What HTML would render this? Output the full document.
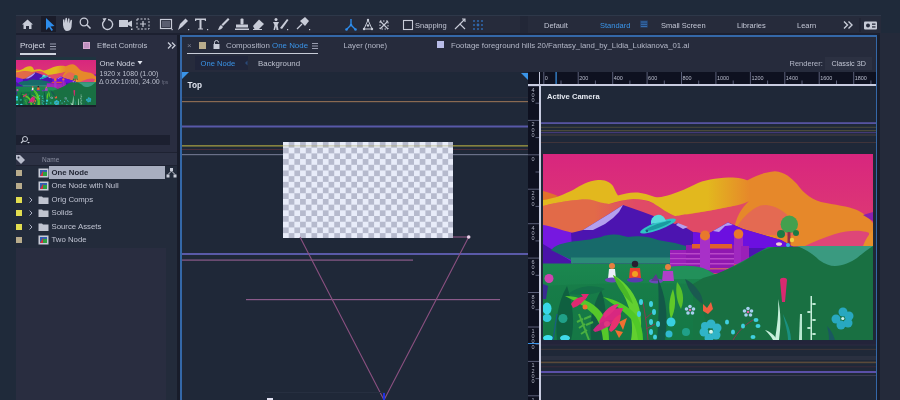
<!DOCTYPE html>
<html><head><meta charset="utf-8">
<style>
*{margin:0;padding:0;box-sizing:border-box}
html,body{width:900px;height:400px;overflow:hidden;background:#1f2a3a;font-family:"Liberation Sans", sans-serif;}
.a{position:absolute}
.t{position:absolute;white-space:nowrap;font-size:7.7px;line-height:10px;color:#c0c4d2}
</style></head><body><div style="position:absolute;left:0;top:0;width:900px;height:400px;overflow:hidden;filter:blur(0.4px)">
<div class="a" style="left:0;top:0;width:900px;height:400px;background:#1f2a3a"></div>
<!-- toolbar -->
<div class="a" style="left:16px;top:15px;width:865px;height:18px;background:#262b3b"></div><div class="a" style="left:16px;top:15px;width:865px;height:1px;background:#2e3849"></div>
<svg class="a" style="left:0;top:1px" width="900" height="40"><g transform="translate(0,-1)">
<path d="M22 24.5 L27.5 19.5 L33 24.5 L31.5 24.5 L31.5 29 L29 29 L29 26 L26 26 L26 29 L23.5 29 L23.5 24.5 Z" fill="#c8ccd8"/>
<rect x="41" y="16" width="15" height="16" fill="#1a1c2a"/>
<path d="M46 18 L46 30 L49 27 L51.5 31 L53 30 L50.5 26.5 L54.5 26 Z" fill="#2d8ceb"/>
<path d="M63 25 L63 20 C63 19 64.5 19 64.5 20 L64.5 23 L65.5 18.5 C65.5 17.5 67 17.5 67 18.5 L67 23 L68 19 C68 18 69.5 18 69.5 19 L69.5 23.5 L70.5 20.5 C70.5 19.5 72 19.5 72 20.5 L71.5 27 C71 30 69 31 67 31 C65 31 63.5 29 63 25 Z" fill="#c8ccd8"/>
<circle cx="84" cy="22" r="3.8" fill="none" stroke="#c8ccd8" stroke-width="1.3"/><path d="M86.8 24.8 L90.5 28.5" stroke="#c8ccd8" stroke-width="1.6"/>
<path d="M104 21 A5 5 0 1 0 108 19.5" fill="none" stroke="#c8ccd8" stroke-width="1.3"/><path d="M102.5 18.5 L106.5 18 L104.5 22 Z" fill="#c8ccd8"/>
<rect x="119" y="20" width="9" height="7" fill="#c8ccd8"/><path d="M128 22.5 L132 20.5 L132 27 L128 25 Z" fill="#c8ccd8"/><rect x="131" y="28.5" width="1.5" height="1.5" fill="#c8ccd8"/>
<rect x="137" y="19" width="12" height="10" fill="none" stroke="#c8ccd8" stroke-width="1" stroke-dasharray="2 1.5"/><path d="M140 24 L146 24 M143 21 L143 27" stroke="#c8ccd8" stroke-width="1.2"/>
<rect x="160.5" y="19.5" width="11" height="9" fill="none" stroke="#c8ccd8" stroke-width="1.2"/><rect x="162" y="21" width="8" height="6" fill="#5a5e70"/><rect x="171.5" y="29" width="1.2" height="1.2" fill="#c8ccd8"/>
<path d="M178 30 L180 24 L185.5 18.5 L188 21 L182.5 26.5 Z" fill="#c8ccd8"/><rect x="188" y="29" width="1.2" height="1.2" fill="#c8ccd8"/>
<path d="M195 18.5 L206 18.5 L206 21 L205 21 L204.5 20 L201.5 20 L201.5 28.5 L203 28.5 L203 29.5 L198 29.5 L198 28.5 L199.5 28.5 L199.5 20 L196.5 20 L196 21 L195 21 Z" fill="#c8ccd8"/><rect x="207" y="29" width="1.2" height="1.2" fill="#c8ccd8"/>
<path d="M228 18 L229.5 19.5 L223 26 L221.5 24.5 Z" fill="#c8ccd8"/><path d="M221 25 L223 27 C222 29 220 30 218 30 C219 28 219 26 221 25 Z" fill="#c8ccd8"/>
<rect x="240.5" y="18.5" width="3" height="6" rx="1" fill="#c8ccd8"/><rect x="236" y="24.5" width="12" height="3" fill="#c8ccd8"/><rect x="235" y="28.5" width="14" height="1.5" fill="#c8ccd8"/>
<path d="M253 26 L259 19.5 L264 24 L258 30 L255 30 Z" fill="#c8ccd8"/><path d="M253 29.5 L262 29.5" stroke="#c8ccd8" stroke-width="1"/>
<circle cx="276" cy="19.5" r="1.5" fill="#c8ccd8"/><path d="M273 22 L279 22 L277.5 25 L278.5 30 L276.5 30 L276 26.5 L275 30 L273.5 30 L274.5 25 Z" fill="#c8ccd8"/><path d="M280 28 L287 19 L288.5 20 L282 29 Z" fill="#c8ccd8"/><rect x="287" y="29" width="1.2" height="1.2" fill="#c8ccd8"/>
<path d="M300 21 L305 17 L309 21 L305 26 Z" fill="#c8ccd8"/><path d="M302 24 L297 29" stroke="#c8ccd8" stroke-width="1.3"/><rect x="309" y="29" width="1.2" height="1.2" fill="#c8ccd8"/>
</g>
<path d="M351 18 L351 24 L346.5 28.5 M351 24 L355.5 28.5" stroke="#2d8ceb" stroke-width="1.4" fill="none"/><circle cx="351" cy="24" r="1.3" fill="#2d8ceb"/><circle cx="346.5" cy="28.5" r="1.3" fill="#2d8ceb"/><circle cx="355.5" cy="28.5" r="1.3" fill="#2d8ceb"/>
<path d="M368 19 L364 28 L372 28 Z" fill="none" stroke="#c8ccd8" stroke-width="1"/><circle cx="368" cy="19" r="1.2" fill="#c8ccd8"/><circle cx="364" cy="28" r="1.2" fill="#c8ccd8"/><circle cx="372" cy="28" r="1.2" fill="#c8ccd8"/><circle cx="368" cy="24.5" r="1.2" fill="#c8ccd8"/>
<path d="M380 20 L388 28 M388 20 L380 28" stroke="#c8ccd8" stroke-width="1.1"/><rect x="380" y="20" width="8" height="8" fill="none" stroke="#c8ccd8" stroke-width="1" stroke-dasharray="1.5 1.5"/>
<rect x="403.5" y="19.5" width="9" height="9" fill="none" stroke="#c8ccd8" stroke-width="1.1"/>
<path d="M455 28 L460 23 L465 28" stroke="#c8ccd8" stroke-width="1.2" fill="none"/><path d="M460 23 L465 18 M462 18 L465 18 L465 21" stroke="#c8ccd8" stroke-width="1.1" fill="none"/>
<g fill="#2f6ab0"><circle cx="474" cy="20" r="1"/><circle cx="478" cy="20" r="1"/><circle cx="482" cy="20" r="1"/><circle cx="474" cy="24" r="1"/><circle cx="482" cy="24" r="1"/><circle cx="474" cy="28" r="1"/><circle cx="478" cy="28" r="1"/><circle cx="482" cy="28" r="1"/><circle cx="478" cy="24" r="1.4"/></g>
<rect x="640" y="19.5" width="8" height="7" fill="#24406a"/><path d="M641 21 L647 21 M641 23.3 L647 23.3 M641 25.6 L647 25.6" stroke="#3a78c0" stroke-width="0.9"/>
<path d="M844 20.5 L847.5 24 L844 27.5 M848.5 20.5 L852 24 L848.5 27.5" stroke="#c8ccd8" stroke-width="1.4" fill="none"/>
<rect x="859.5" y="17" width="1" height="14" fill="#1c2030"/>
<rect x="864" y="20.5" width="13" height="8" rx="1" fill="#c8ccd8"/><circle cx="868" cy="24.5" r="2" fill="#262a3b"/><rect x="872" y="22.5" width="3.5" height="1.3" fill="#262a3b"/><rect x="872" y="25.3" width="3.5" height="1.3" fill="#262a3b"/>
<rect x="520" y="15" width="8" height="17" fill="#222737"/></svg>
<div class="t" style="left:415px;top:20.5px;font-size:7.5px;color:#c2c6d4">Snapping</div>
<div class="t" style="left:544px;top:20.5px;font-size:7.5px;color:#c2c6d4">Default</div>
<div class="t" style="left:600px;top:20.5px;font-size:7.5px;color:#3a94e8">Standard</div>
<div class="t" style="left:661px;top:20.5px;font-size:7.5px;color:#c2c6d4">Small Screen</div>
<div class="t" style="left:737px;top:20.5px;font-size:7.5px;color:#c2c6d4">Libraries</div>
<div class="t" style="left:797px;top:20.5px;font-size:7.5px;color:#c2c6d4">Learn</div>

<!-- project panel -->
<div class="a" style="left:16px;top:33px;width:161px;height:367px;background:#292d40"></div>
<div class="a" style="left:16px;top:166px;width:161px;height:82px;background:#232b3b"></div>
<div class="a" style="left:166px;top:248px;width:11px;height:152px;background:#232b3b"></div>
<div class="a" style="left:177px;top:33px;width:3px;height:367px;background:#181c2a"></div><div class="a" style="left:16px;top:33px;width:865px;height:2px;background:#1c2030"></div>
<div class="t" style="left:20px;top:41px;font-size:8px;color:#d8dce8">Project</div>
<div class="a" style="left:20px;top:53px;width:36px;height:1.5px;background:#d0d4e0"></div>
<svg class="a" style="left:0;top:30px" width="180" height="30">
<path d="M50 14 L56 14 M50 16.5 L56 16.5 M50 19 L56 19" stroke="#9a9eb0" stroke-width="1"/>
<rect x="83" y="12" width="7" height="7" fill="#d8a8d0"/><rect x="84" y="13" width="5" height="5" fill="#c090c0"/>
<path d="M168 12.5 L171 15.5 L168 18.5 M172 12.5 L175 15.5 L172 18.5" stroke="#c8ccd8" stroke-width="1.3" fill="none"/>
</svg>
<div class="t" style="left:97px;top:41px;color:#bcc0ce">Effect Controls</div>
<div class="a" style="left:16px;top:57px;width:80px;height:3px;background:#1f3440"></div><div class="a" style="left:16px;top:105px;width:80px;height:1.5px;background:#1a1e2a"></div><svg class="a" style="left:16px;top:60px" width="80" height="45" viewBox="0 0 330 186" preserveAspectRatio="none">
<defs>
<linearGradient id="sky" x1="0" y1="0" x2="0" y2="1"><stop offset="0" stop-color="#d8267e"/><stop offset="0.45" stop-color="#de3c72"/></linearGradient>
<linearGradient id="gnd" x1="0" y1="0" x2="0" y2="1"><stop offset="0" stop-color="#1c8c52"/><stop offset="1" stop-color="#157444"/></linearGradient>
<linearGradient id="coral" x1="0" y1="0" x2="1" y2="0"><stop offset="0.25" stop-color="#e26a48"/><stop offset="0.45" stop-color="#e04a66"/></linearGradient>
<linearGradient id="ylw" x1="0" y1="0" x2="1" y2="0"><stop offset="0.78" stop-color="#e2b81e"/><stop offset="0.98" stop-color="#e6882a"/></linearGradient>
</defs>
<rect width="330" height="186" fill="url(#sky)"/>
<path d="M0 37 C5 38 10 40 15 42 L0 50 Z" fill="#e2702c"/>
<!-- orange big -->
<path d="M140 62 C160 50 190 36 205 26 C212 22 222 18 232 17.3 C242 18 248 24 254 30 C260 38 266 44 278 48 C292 51 305 52 314 56 C322 60 326 64 330 69 L330 92 L140 92 Z" fill="#e6882a"/>
<!-- coral/pink under yellow -->
<path d="M0 52 C15 48 30 46 45 45.6 C55 46 60 49 66 50 C72 49 80 46 90 45 C100 45 108 48 115 52 C122 57 128 61 132 62 C150 60 170 56 190 52 L206 47 C198 55 193 62 190 80 L190 95 L0 95 Z" fill="url(#coral)"/>
<!-- yellow band -->
<path d="M0 46 C10 45 22 40 30 36 C38 31 45 27 55 26 C62 26 66 27 70 32 C72 36 73 39 75 41.5 C80 40 86 38.5 92 38.5 C100 38.5 106 41 112 43 C118 44 122 42 128 40.5 C136 38 145 34 155 29 C165 25 178 23.5 190 23.5 C198 24 204 25 208 29 C212 34 212 42 206 47 C200 50 196 51 190 52 C175 55 160 58 145 60 C138 61 134 62 132 62 C126 60 118 54 110 49 C104 46 98 45 90 45 C82 45.5 74 47.5 66 50 C58 49.5 52 46 45 45.6 C32 45.5 15 48 0 52 Z" fill="url(#ylw)"/>
<!-- salmon hill -->
<path d="M190 80 C195 70 200 63 208 57 C214 52 218 51 223 51 C232 52 240 56 245 62 C248 66 251 72 256 82 Z" fill="#e46a52"/>
<!-- pink hill right -->
<path d="M262 92 C270 88 280 84 292 80 C302 77 310 76.5 318 77 C322 77.5 324 78 326 79 L326 92 Z" fill="#de4678"/>
<path d="M320 92 C322 86 326 80 330 76 L330 92 Z" fill="#e8902a"/>
<path d="M320 61 L330 58 L330 67 Z" fill="#8a20b0"/>
<!-- purple left -->
<path d="M0 71 C8 72 18 76 30 79 L60 100 L60 112 L0 112 Z" fill="#7618e0"/>
<!-- dark purple big mountain -->
<path d="M28 79 L40 76 L66 60 L80 51 L100 58 L116 64 L132 70 L135 69 L150 78 L165 80 L185 68.6 L200 75 L238 86 L252 94 L252 110 L30 110 Z" fill="#4c14b0"/>
<path d="M150 78 L165 80 L185 68.6 L200 75 L238 86 L252 94 L150 94 Z" fill="#6c10e0"/>
<path d="M80 51 L66 60 L40 76 L50 76 L62 70 L70 64 L76 58 Z" fill="#b4a0ee"/>
<path d="M135 69 L145 73 L140 75 L133 71 Z" fill="#b4a0ee"/>
<path d="M170 77 L185 68.6 L190 71 L182 72 L176 78 Z" fill="#b4a0ee"/>
<path d="M0 90 L28 107 L30 112 L0 112 Z" fill="#4a14a8"/>
<!-- teal bushes -->
<path d="M8 96 C12 92 16 90 20 89.5 C26 88 30 87 35 87 C40 86 44 86 47 85.5 C52 84 55 83.7 58 83 C62 81 66 81 70 80.5 C76 80 80 82 85 83 C90 82 95 82 100 82.5 C106 83 110 84 115 86 C120 87 126 88 132 89 L150 94 L150 106 L28 106 Z" fill="#176a6a"/>
<path d="M28 103.5 L140 103.5 L140 109.5 L28 109.5 Z" fill="#2c8a78"/>
<!-- saturn -->
<ellipse cx="115" cy="72" rx="19" ry="4" fill="#30c4c4" transform="rotate(-20 115 72)"/><ellipse cx="115" cy="72" rx="14" ry="2" fill="#1a9aa0" transform="rotate(-20 115 72)"/><path d="M108 70 A7.5 7.5 0 0 1 123 67 Z" fill="#58dcdc"/><circle cx="104" cy="77" r="1.2" fill="#1a5a80"/>
<!-- castle -->
<rect x="127" y="96" width="20" height="20" fill="#9a1eb8"/>
<rect x="127" y="99" width="20" height="1.2" fill="#b848c8"/>
<rect x="127" y="104" width="20" height="1.2" fill="#b848c8"/>
<rect x="127" y="109" width="20" height="1.2" fill="#b848c8"/>
<rect x="143" y="91" width="48" height="28" fill="#9018b0"/>
<rect x="149" y="90" width="40" height="4.5" fill="#e0602c"/>
<rect x="143" y="99" width="48" height="1.5" fill="#b848c8"/>
<rect x="143" y="104" width="48" height="1.5" fill="#b848c8"/>
<rect x="143" y="109" width="48" height="1.5" fill="#b848c8"/>
<rect x="143" y="114" width="48" height="1.5" fill="#c85a70"/>
<rect x="157" y="82" width="10" height="34" fill="#a830c8"/>
<circle cx="162" cy="81.5" r="5" fill="#e8782c"/>
<rect x="191" y="80" width="9" height="30" fill="#a028c0"/>
<circle cx="195.5" cy="80" r="4.8" fill="#e8782c"/>
<rect x="198" y="92" width="8" height="16" fill="#9a20b8"/>
<!-- green ground -->
<path d="M0 109.5 L127 109.5 L127 119 L175 120 L200 107 L225 93 L330 92 L330 186 L0 186 Z" fill="url(#gnd)"/>
<!-- light green hill -->
<path d="M120 114 C135 111 150 111 160 114 C168 117 172 120 176 125 L120 125 Z" fill="#22905a"/>
<!-- dark green big hill -->
<path d="M160 124 C175 120 188 114 200 108 C212 100 220 95 232 93 L330 92 L330 186 L150 186 L150 130 Z" fill="#197042"/>
<path d="M0 132 C40 130 90 128 150 130 L170 186 L0 186 Z" fill="#167a46" opacity="0.6"/>
<!-- teal valley -->
<path d="M254 92 C262 95 270 100 276 106 C282 110 287 112 292 112 C300 112 308 108 314 104 C320 99 325 95 330 92 Z" fill="#3a9a80"/>
<!-- tree -->
<circle cx="246.3" cy="70.3" r="8.7" fill="#44a04e"/>
<circle cx="238" cy="80" r="4" fill="#1c7a44"/>
<circle cx="253" cy="79" r="3" fill="#1c7a44"/>
<rect x="244.5" y="78" width="3" height="13" fill="#903048"/>
<circle cx="249" cy="86" r="2.2" fill="#f0d040"/>
<circle cx="245" cy="91" r="2" fill="#40b0e0"/>
<ellipse cx="236" cy="90" rx="3" ry="1.8" fill="#f0d0d0"/>
<!-- people -->
<circle cx="69" cy="112" r="3" fill="#e88040"/><path d="M66 115 L72 115 L73 125 L65 125 Z" fill="#ecf0f8"/><ellipse cx="69" cy="126" rx="7" ry="2.5" fill="#6a48b8"/>
<circle cx="92" cy="110" r="3.2" fill="#2a1e30"/><path d="M87 114 L97 114 L98 124 L86 124 Z" fill="#e84030"/><circle cx="92" cy="120" r="3" fill="#f0a020"/><ellipse cx="92" cy="126" rx="8" ry="2.6" fill="#5a3ab0"/>
<circle cx="125" cy="113" r="3" fill="#e88040"/><path d="M120 117 L130 117 L131 127 L119 127 Z" fill="#b040c8"/><ellipse cx="113" cy="127" rx="7" ry="2.5" fill="#6a48b8"/><path d="M108 127 L113 120 L116 127 Z" fill="#5a3a90"/>
<!-- pink flower top-left -->
<circle cx="6" cy="124.5" r="4.5" fill="#d044b0"/>
<path d="M0 130 L5 132 L3 145 L0 145 Z" fill="#3a2a90"/>
<!-- dark leaves -->
<path d="M14 186 C12 170 14 150 24 132 C30 150 32 170 28 186 Z" fill="#0f6040"/>
<path d="M48 186 C46 168 50 150 58 136 C64 152 64 170 60 186 Z" fill="#115e42"/>
<path d="M25 140 C35 132 50 130 62 135 C55 140 42 142 25 140 Z" fill="#137048"/>
<path d="M115 125 C122 140 126 160 122 186 L114 186 C116 165 116 145 115 125 Z" fill="#135848"/>
<path d="M142 125 C152 130 160 140 160 150 C152 145 146 138 142 125 Z" fill="#1a5a50"/>
<!-- bright green leaves -->
<path d="M22 142 C36 142 50 148 58 158 C64 166 66 176 66 186 L60 186 C59 176 56 166 50 160 C42 152 32 147 22 142 Z" fill="#56c82a"/>
<path d="M70 121 C80 126 90 136 95 150 C99 162 99 176 96 186 L88 186 C90 176 89 164 86 154 C82 142 76 132 70 121 Z" fill="#62d030"/><path d="M70 121 C74 132 80 142 90 150 C86 138 80 128 70 121 Z" fill="#4ab828"/>
<path d="M60 143 C74 146 86 152 94 162 C98 170 100 178 100 186 L95 186 C94 178 92 170 88 165 C80 156 70 150 60 143 Z" fill="#50c828"/>
<path d="M130 135 C133 145 133 155 128 165 C125 155 126 145 130 135 Z" fill="#60c828"/>
<path d="M134 128 C140 135 142 145 138 155 C134 148 132 138 134 128 Z" fill="#58c02a"/>
<!-- ferns -->
<path d="M36 160 L46 186 M40 165 L34 168 M42 170 L36 174 M44 176 L38 180 M41 165 L48 162 M43 171 L50 168" stroke="#4ab040" stroke-width="2" fill="none"/>
<!-- red/pink flowers -->
<path d="M28 150 C32 144 38 142 44 143 C40 148 36 152 30 154 Z" fill="#e02872"/>
<path d="M38 140 L46 140 L42 146 Z" fill="#e02872"/>
<circle cx="42" cy="153" r="2.5" fill="#f07030"/>
<path d="M56 168 C60 158 68 154 80 154 C78 162 72 168 62 174 Z" fill="#d82880"/><path d="M60 160 C66 152 72 150 76 150 C72 156 68 160 62 164 Z" fill="#e03080"/><path d="M50 176 C56 168 62 166 70 166 C66 172 60 176 52 178 Z" fill="#c82880"/>
<path d="M66 176 C68 168 72 162 78 160 C78 168 74 174 68 178 Z" fill="#e83070"/>
<path d="M76 168 L84 164 L80 176 Z" fill="#f07030"/>
<path d="M72 176 L80 178 L76 184 Z" fill="#f07030"/>
<circle cx="64" cy="170" r="3" fill="#e03880"/>
<!-- cyan leaves left -->
<ellipse cx="4" cy="154.5" rx="4.5" ry="6" fill="#38d8e8"/>
<ellipse cx="4" cy="164" rx="4.5" ry="4" fill="#30c8d8"/>
<circle cx="20" cy="164.5" r="4.5" fill="#20a088"/>
<ellipse cx="5" cy="184" rx="5" ry="3" fill="#40e0f0"/>
<ellipse cx="22" cy="184" rx="5" ry="3" fill="#40d8e8"/>
<path d="M10 186 L14 160" stroke="#1a5a88" stroke-width="1.2"/>
<!-- branch with cyan leaves -->
<path d="M105 186 C104 172 102 160 100 148 M102 165 L110 158 M103 175 L112 170" stroke="#8a3a50" stroke-width="1" fill="none"/>
<g fill="#40d0e0"><ellipse cx="98" cy="148" rx="2" ry="3"/><ellipse cx="108" cy="150" rx="2" ry="3"/><ellipse cx="111" cy="158" rx="2" ry="3"/><ellipse cx="108" cy="168" rx="2" ry="3"/><ellipse cx="115" cy="170" rx="2" ry="3"/><ellipse cx="108" cy="178" rx="2" ry="3"/><ellipse cx="112" cy="183" rx="2" ry="2.5"/><ellipse cx="96" cy="160" rx="2" ry="3"/></g>
<circle cx="128" cy="168" r="4.5" fill="#38d0e0"/>
<circle cx="126" cy="180" r="3.5" fill="#30b8d0"/>
<circle cx="143" cy="178" r="4" fill="#20a088"/>
<!-- flowers middle -->
<g fill="#a8d0f0"><circle cx="147" cy="152.5" r="1.8"/><circle cx="150.5" cy="155" r="1.8"/><circle cx="149.5" cy="159" r="1.8"/><circle cx="145" cy="159" r="1.8"/><circle cx="143.5" cy="155" r="1.8"/></g><circle cx="147" cy="156" r="1.3" fill="#e060a0"/>
<path d="M160 150 L164 154 L168 148 L170 155 L165 160 L160 157 Z" fill="#f06040"/>
<g fill="#30b4c8"><circle cx="168" cy="170" r="4.5"/><circle cx="174" cy="174" r="4.5"/><circle cx="173" cy="181" r="4.5"/><circle cx="166" cy="184" r="4.5"/><circle cx="161" cy="178" r="4.5"/><circle cx="162" cy="172" r="4"/></g><circle cx="168" cy="177.8" r="2" fill="#d0f4f0"/>
<g fill="#a8d0f0"><circle cx="205" cy="154.5" r="1.8"/><circle cx="208.5" cy="157" r="1.8"/><circle cx="207.5" cy="161" r="1.8"/><circle cx="203" cy="161" r="1.8"/><circle cx="201.5" cy="157" r="1.8"/></g><circle cx="205" cy="158" r="1.3" fill="#e060a0"/>
<path d="M190 186 C195 178 200 172 210 166" stroke="#8a3a50" stroke-width="1" fill="none"/>
<g fill="#40d0e0"><ellipse cx="213" cy="166" rx="2.5" ry="2"/><ellipse cx="215" cy="172" rx="2.5" ry="2"/><ellipse cx="200" cy="172" rx="2" ry="2.5"/><ellipse cx="190" cy="178" rx="2" ry="2.5"/><ellipse cx="210" cy="183" rx="2.5" ry="2"/><ellipse cx="184" cy="168" rx="2" ry="2.5"/></g>
<!-- pink stalk -->
<path d="M237 126 C237 123 244 123 244 126 L242 148 L239 148 Z" fill="#d82a70"/>
<!-- white grass -->
<path d="M232 186 C234 172 236 160 235 145 C238 158 238 172 236 186 Z" fill="#c8f0dc"/>
<path d="M222 176 C228 178 232 182 234 186 L230 186 C228 182 225 179 222 176 Z" fill="#c8f0dc"/>
<path d="M256 186 L257 160 L259 160 L259 186 Z" fill="#b8e8d0"/>
<path d="M240 160 C245 170 248 178 248 186 L245 186 C245 178 242 170 240 160 Z" fill="#1a9080"/>
<path d="M267.5 186 L267.5 142 L269 142 L269 186 Z" fill="#c8f0dc"/>
<g fill="#c8f0dc"><ellipse cx="271" cy="150" rx="2" ry="1"/><ellipse cx="266" cy="158" rx="2" ry="1"/><ellipse cx="271" cy="166" rx="2" ry="1"/><ellipse cx="266" cy="174" rx="2" ry="1"/><ellipse cx="271" cy="180" rx="2" ry="1"/></g>
<!-- cyan flower right -->
<g fill="#28a8c0"><circle cx="300" cy="158" r="4.5"/><circle cx="306" cy="162" r="4.5"/><circle cx="305" cy="169" r="4.5"/><circle cx="298" cy="171" r="4.5"/><circle cx="293" cy="165" r="4.5"/></g><circle cx="299.8" cy="164.5" r="1.6" fill="#d0f4f0"/>
<path d="M284 172 C288 176 290 180 292 186 L286 186 C286 180 285 176 284 172 Z" fill="#1a5860"/>
</svg>
<div class="t" style="left:99.5px;top:58.5px;font-size:7.8px;color:#d0d4e0">One Node</div>
<svg class="a" style="left:136px;top:60px" width="8" height="6"><path d="M1.5 1 L6.5 1 L4 4.5 Z" fill="#e0e4ee"/></svg>
<div class="t" style="left:99.5px;top:68.5px;font-size:7px;color:#bcc0ce">1920 x 1080 (1.00)</div>
<div class="t" style="left:99px;top:77px;font-size:7px;color:#bcc0ce">&#916; 0:00:10:00, 24.00 <span style="color:#6a6e80;font-size:5px">fps</span></div>
<div class="a" style="left:16px;top:135px;width:154px;height:10px;background:#1c2030"></div>
<svg class="a" style="left:16px;top:133px" width="20" height="14"><circle cx="9" cy="6" r="2.5" fill="none" stroke="#c8ccd8" stroke-width="1"/><path d="M7.3 7.8 L5 10" stroke="#c8ccd8" stroke-width="1.2"/><path d="M11 9 L14 9 L12.5 10.5 Z" fill="#c8ccd8"/></svg>
<div class="a" style="left:16px;top:152px;width:161px;height:1px;background:#1e2232"></div>
<div class="a" style="left:16px;top:153px;width:161px;height:12px;background:#2c3144"></div>
<div class="a" style="left:16px;top:165px;width:161px;height:1px;background:#1e2232"></div>
<svg class="a" style="left:14px;top:153px" width="14" height="12"><path d="M2 2 L6 2 L11 7 L7 11 L2 6 Z" fill="#b8bccb"/><circle cx="4.5" cy="4.5" r="1" fill="#2c3144"/></svg>
<div class="t" style="left:42px;top:155px;font-size:6.5px;color:#8a8ea0">Name</div>
<div class="a" style="left:49px;top:166px;width:116px;height:13px;background:#a8aec0"></div>
<div class="a" style="left:16px;top:169.8px;width:6px;height:6px;background:#b8ac8c"></div>
<svg class="a" style="left:38px;top:167.8px" width="12" height="10"><rect x="0.5" y="0.5" width="10" height="9" fill="#c8ccd8"/><rect x="2" y="2" width="7" height="6" fill="#3060b0"/><path d="M2 8 L5 3 L9 8 Z" fill="#d03040"/><rect x="5" y="4" width="4" height="4" fill="#30a040"/></svg>
<div class="t" style="left:51.5px;top:167.8px;font-size:7.8px;font-weight:bold;color:#1e2230">One Node</div>
<div class="a" style="left:16px;top:183.3px;width:6px;height:6px;background:#b8ac8c"></div>
<svg class="a" style="left:38px;top:181.3px" width="12" height="10"><rect x="0.5" y="0.5" width="10" height="9" fill="#c8ccd8"/><rect x="2" y="2" width="7" height="6" fill="#3060b0"/><path d="M2 8 L5 3 L9 8 Z" fill="#d03040"/><rect x="5" y="4" width="4" height="4" fill="#30a040"/></svg>
<div class="t" style="left:51.5px;top:181.3px;font-size:7.8px;color:#c0c4d2">One Node with Null</div>
<div class="a" style="left:16px;top:196.8px;width:6px;height:6px;background:#e2de50"></div>
<svg class="a" style="left:27px;top:195.8px" width="8" height="8"><path d="M2.5 1.5 L5 4 L2.5 6.5" stroke="#a8acc0" stroke-width="1" fill="none"/></svg>
<svg class="a" style="left:38px;top:194.8px" width="12" height="10"><path d="M0.5 1.5 L4 1.5 L5 2.5 L10.5 2.5 L10.5 9 L0.5 9 Z" fill="#c0c4d0"/></svg>
<div class="t" style="left:51.5px;top:194.8px;font-size:7.8px;color:#c0c4d2">Orig Comps</div>
<div class="a" style="left:16px;top:210.3px;width:6px;height:6px;background:#e2de50"></div>
<svg class="a" style="left:27px;top:209.3px" width="8" height="8"><path d="M2.5 1.5 L5 4 L2.5 6.5" stroke="#a8acc0" stroke-width="1" fill="none"/></svg>
<svg class="a" style="left:38px;top:208.3px" width="12" height="10"><path d="M0.5 1.5 L4 1.5 L5 2.5 L10.5 2.5 L10.5 9 L0.5 9 Z" fill="#c0c4d0"/></svg>
<div class="t" style="left:51.5px;top:208.3px;font-size:7.8px;color:#c0c4d2">Solids</div>
<div class="a" style="left:16px;top:223.8px;width:6px;height:6px;background:#e2de50"></div>
<svg class="a" style="left:27px;top:222.8px" width="8" height="8"><path d="M2.5 1.5 L5 4 L2.5 6.5" stroke="#a8acc0" stroke-width="1" fill="none"/></svg>
<svg class="a" style="left:38px;top:221.8px" width="12" height="10"><path d="M0.5 1.5 L4 1.5 L5 2.5 L10.5 2.5 L10.5 9 L0.5 9 Z" fill="#c0c4d0"/></svg>
<div class="t" style="left:51.5px;top:221.8px;font-size:7.8px;color:#c0c4d2">Source Assets</div>
<div class="a" style="left:16px;top:237.3px;width:6px;height:6px;background:#b8ac8c"></div>
<svg class="a" style="left:38px;top:235.3px" width="12" height="10"><rect x="0.5" y="0.5" width="10" height="9" fill="#c8ccd8"/><rect x="2" y="2" width="7" height="6" fill="#3060b0"/><path d="M2 8 L5 3 L9 8 Z" fill="#d03040"/><rect x="5" y="4" width="4" height="4" fill="#30a040"/></svg>
<div class="t" style="left:51.5px;top:235.3px;font-size:7.8px;color:#c0c4d2">Two Node</div>
<svg class="a" style="left:166px;top:167px" width="12" height="12"><rect x="4" y="1" width="3" height="3" fill="#c8ccd8"/><rect x="0.5" y="7.5" width="3" height="3" fill="#c8ccd8"/><rect x="7.5" y="7.5" width="3" height="3" fill="#c8ccd8"/><path d="M5.5 4 L2 7.5 M5.5 4 L9 7.5" stroke="#c8ccd8" stroke-width="1"/></svg>

<div class="a" style="left:180px;top:35px;width:697px;height:365px;background:#3468a8"></div>
<div class="a" style="left:182px;top:37px;width:694px;height:363px;background:#262b3c"></div>
<div class="t" style="left:187px;top:40.5px;font-size:8px;color:#7a7e90">&#215;</div>
<div class="a" style="left:199px;top:42px;width:7px;height:7px;background:#b8ac8c"></div>
<svg class="a" style="left:212px;top:40px" width="10" height="10"><path d="M2.5 4 L2.5 2.5 A2 2 0 0 1 6.5 2.5" stroke="#c8ccd8" stroke-width="1" fill="none"/><rect x="1.5" y="4" width="6" height="5" fill="#c8ccd8"/></svg>
<div class="t" style="left:226px;top:40.5px;font-size:7.9px;color:#b4b8c8">Composition <span style="color:#3a94e8">One Node</span></div>
<svg class="a" style="left:310px;top:40px" width="10" height="12"><path d="M2 3.5 L8 3.5 M2 6 L8 6 M2 8.5 L8 8.5" stroke="#9a9eb0" stroke-width="1"/></svg>
<div class="a" style="left:187px;top:52.5px;width:131px;height:1.5px;background:#c8ccd8"></div>
<div class="t" style="left:343.5px;top:40.8px;font-size:7.7px;color:#b4b8c8">Layer (none)</div>
<div class="a" style="left:437px;top:41px;width:7px;height:7px;background:#b8bce8"></div>
<div class="t" style="left:451px;top:41.2px;font-size:7.8px;color:#b4b8c8">Footage foreground hills 20/Fantasy_land_by_Lidia_Lukianova_01.ai</div>
<div class="a" style="left:195px;top:56px;width:53px;height:14px;background:#20253a"></div>
<div class="t" style="left:200.5px;top:58.5px;font-size:7.6px;color:#3a94e8">One Node</div>
<svg class="a" style="left:243px;top:59px" width="6" height="8"><path d="M4.5 1.5 L2 4 L4.5 6.5 Z" fill="#2a4a78"/></svg>
<div class="t" style="left:258px;top:58.5px;font-size:7.9px;color:#bcc0ce">Background</div>
<div class="a" style="left:825px;top:57px;width:47px;height:13px;background:#2c3142"></div>
<div class="t" style="left:789.5px;top:58.5px;font-size:7.5px;color:#b4b8c8">Renderer:</div>
<div class="t" style="left:831.5px;top:58.5px;font-size:7.2px;color:#c2c6d4">Classic 3D</div>

<!-- left view -->
<div class="a" style="left:182px;top:72px;width:346px;height:328px;background:#1f2838"></div>
<svg class="a" style="left:182px;top:72px" width="346" height="328">
<path d="M0 0 L7 0 L0 7 Z" fill="#3a94e8"/>
<rect x="0" y="25" width="346" height="1" fill="#2a2c3a"/>
<rect x="0" y="29" width="346" height="1.2" fill="#8a6a52"/>
<rect x="0" y="53.5" width="346" height="2" fill="#5858a8"/>
<rect x="0" y="73.2" width="346" height="1.3" fill="#a09a40"/>
<rect x="0" y="77" width="346" height="1" fill="#4a2e3a"/>
<rect x="0" y="82" width="346" height="1.2" fill="#6a7088"/>
<rect x="0" y="181" width="346" height="2" fill="#5a5aa8"/>
<rect x="0" y="187.5" width="231" height="1.2" fill="#8a5a8a"/>
<rect x="64" y="227" width="254" height="1.2" fill="#8a5a8a"/>
</svg>
<div class="a" style="left:283px;top:142px;width:170px;height:95.5px;background-color:#e8ecf9;background-image:conic-gradient(#b6bacd 25%, transparent 0 50%, #b6bacd 0 75%, transparent 0);background-size:11.4px 11.4px"></div>
<svg class="a" style="left:182px;top:72px" width="346" height="328">
<rect x="101" y="73.2" width="170" height="1.3" fill="#a09a40" opacity="0.35"/>
<path d="M118 165 L202 328 L286.7 165" stroke="#8a5080" stroke-width="1.1" fill="none"/>
<path d="M271 165 L286.7 165" stroke="#9a5a8a" stroke-width="1"/>
<circle cx="286.7" cy="165" r="1.8" fill="#e8d0e8"/>
<rect x="201" y="320" width="2" height="8" fill="#2030e0"/>
<rect x="85" y="326" width="6" height="2" fill="#e0e0f0"/><rect x="83" y="320" width="120" height="1" fill="#262f40"/>
</svg>
<div class="t" style="left:187.5px;top:80.5px;font-size:8.2px;font-weight:bold;color:#e0e4ee">Top</div>

<!-- vertical ruler -->
<div class="a" style="left:528px;top:72px;width:12px;height:328px;background:#0e1120"></div>
<svg class="a" style="left:528px;top:72px" width="12" height="328"><rect x="0" y="13.4" width="11" height="1" fill="#5a5f78"/>
<rect x="7.5" y="30.7" width="3.5" height="1" fill="#5a5f78"/>
<text x="5" y="19.9" font-size="5.5" text-anchor="middle" fill="#b0b4c4" font-family="Liberation Sans">4</text>
<text x="5" y="25.1" font-size="5.5" text-anchor="middle" fill="#b0b4c4" font-family="Liberation Sans">0</text>
<text x="5" y="30.3" font-size="5.5" text-anchor="middle" fill="#b0b4c4" font-family="Liberation Sans">0</text>
<rect x="0" y="47.9" width="11" height="1" fill="#5a5f78"/>
<rect x="7.5" y="65.1" width="3.5" height="1" fill="#5a5f78"/>
<text x="5" y="54.4" font-size="5.5" text-anchor="middle" fill="#b0b4c4" font-family="Liberation Sans">2</text>
<text x="5" y="59.6" font-size="5.5" text-anchor="middle" fill="#b0b4c4" font-family="Liberation Sans">0</text>
<text x="5" y="64.8" font-size="5.5" text-anchor="middle" fill="#b0b4c4" font-family="Liberation Sans">0</text>
<rect x="0" y="82.3" width="11" height="1" fill="#5a5f78"/>
<rect x="7.5" y="99.5" width="3.5" height="1" fill="#5a5f78"/>
<text x="5" y="88.8" font-size="5.5" text-anchor="middle" fill="#b0b4c4" font-family="Liberation Sans">0</text>
<rect x="0" y="116.7" width="11" height="1" fill="#5a5f78"/>
<rect x="7.5" y="133.9" width="3.5" height="1" fill="#5a5f78"/>
<text x="5" y="123.2" font-size="5.5" text-anchor="middle" fill="#b0b4c4" font-family="Liberation Sans">2</text>
<text x="5" y="128.4" font-size="5.5" text-anchor="middle" fill="#b0b4c4" font-family="Liberation Sans">0</text>
<text x="5" y="133.6" font-size="5.5" text-anchor="middle" fill="#b0b4c4" font-family="Liberation Sans">0</text>
<rect x="0" y="151.2" width="11" height="1" fill="#5a5f78"/>
<rect x="7.5" y="168.4" width="3.5" height="1" fill="#5a5f78"/>
<text x="5" y="157.7" font-size="5.5" text-anchor="middle" fill="#b0b4c4" font-family="Liberation Sans">4</text>
<text x="5" y="162.9" font-size="5.5" text-anchor="middle" fill="#b0b4c4" font-family="Liberation Sans">0</text>
<text x="5" y="168.1" font-size="5.5" text-anchor="middle" fill="#b0b4c4" font-family="Liberation Sans">0</text>
<rect x="0" y="185.6" width="11" height="1" fill="#5a5f78"/>
<rect x="7.5" y="202.8" width="3.5" height="1" fill="#5a5f78"/>
<text x="5" y="192.1" font-size="5.5" text-anchor="middle" fill="#b0b4c4" font-family="Liberation Sans">6</text>
<text x="5" y="197.3" font-size="5.5" text-anchor="middle" fill="#b0b4c4" font-family="Liberation Sans">0</text>
<text x="5" y="202.5" font-size="5.5" text-anchor="middle" fill="#b0b4c4" font-family="Liberation Sans">0</text>
<rect x="0" y="220.0" width="11" height="1" fill="#5a5f78"/>
<rect x="7.5" y="237.2" width="3.5" height="1" fill="#5a5f78"/>
<text x="5" y="226.5" font-size="5.5" text-anchor="middle" fill="#b0b4c4" font-family="Liberation Sans">8</text>
<text x="5" y="231.7" font-size="5.5" text-anchor="middle" fill="#b0b4c4" font-family="Liberation Sans">0</text>
<text x="5" y="236.9" font-size="5.5" text-anchor="middle" fill="#b0b4c4" font-family="Liberation Sans">0</text>
<rect x="0" y="254.5" width="11" height="1" fill="#5a5f78"/>
<rect x="7.5" y="271.7" width="3.5" height="1" fill="#5a5f78"/>
<text x="5" y="261.0" font-size="5.5" text-anchor="middle" fill="#b0b4c4" font-family="Liberation Sans">1</text>
<text x="5" y="266.2" font-size="5.5" text-anchor="middle" fill="#b0b4c4" font-family="Liberation Sans">0</text>
<text x="5" y="271.4" font-size="5.5" text-anchor="middle" fill="#b0b4c4" font-family="Liberation Sans">0</text>
<text x="5" y="276.6" font-size="5.5" text-anchor="middle" fill="#b0b4c4" font-family="Liberation Sans">0</text>
<rect x="0" y="288.9" width="11" height="1" fill="#5a5f78"/>
<rect x="7.5" y="306.1" width="3.5" height="1" fill="#5a5f78"/>
<text x="5" y="295.4" font-size="5.5" text-anchor="middle" fill="#b0b4c4" font-family="Liberation Sans">1</text>
<text x="5" y="300.6" font-size="5.5" text-anchor="middle" fill="#b0b4c4" font-family="Liberation Sans">2</text>
<text x="5" y="305.8" font-size="5.5" text-anchor="middle" fill="#b0b4c4" font-family="Liberation Sans">0</text>
<text x="5" y="311.0" font-size="5.5" text-anchor="middle" fill="#b0b4c4" font-family="Liberation Sans">0</text>
<rect x="0" y="323.3" width="11" height="1" fill="#5a5f78"/>
<rect x="7.5" y="340.5" width="3.5" height="1" fill="#5a5f78"/>
<text x="5" y="329.8" font-size="5.5" text-anchor="middle" fill="#b0b4c4" font-family="Liberation Sans">1</text>
<text x="5" y="335.0" font-size="5.5" text-anchor="middle" fill="#b0b4c4" font-family="Liberation Sans">4</text>
<text x="5" y="340.2" font-size="5.5" text-anchor="middle" fill="#b0b4c4" font-family="Liberation Sans">0</text>
<text x="5" y="345.4" font-size="5.5" text-anchor="middle" fill="#b0b4c4" font-family="Liberation Sans">0</text>
<path d="M-7 2 L0 2 L0 8 Z" fill="#3a94e8"/>
</svg>
<svg class="a" style="left:521px;top:73px" width="8" height="8"><path d="M0 0 L7 0 L7 7 Z" fill="#3a94e8"/></svg>
<div class="a" style="left:539px;top:72px;width:1.5px;height:328px;background:#c8cce0"></div>
<div class="a" style="left:528px;top:343px;width:11px;height:1.2px;background:#3a94e8"></div>
<!-- horizontal ruler -->
<div class="a" style="left:540px;top:72px;width:336px;height:12px;background:#0e1120"></div>
<svg class="a" style="left:540px;top:72px" width="336" height="13"><rect x="3.3" y="0" width="1" height="12" fill="#5a5f78"/>
<text x="4.8" y="7.8" font-size="5.5" fill="#b8bccc" font-family="Liberation Sans">0</text>
<rect x="20.5" y="8.5" width="1" height="3.5" fill="#5a5f78"/>
<rect x="37.7" y="0" width="1" height="12" fill="#5a5f78"/>
<text x="39.2" y="7.8" font-size="5.5" fill="#b8bccc" font-family="Liberation Sans">200</text>
<rect x="54.9" y="8.5" width="1" height="3.5" fill="#5a5f78"/>
<rect x="72.2" y="0" width="1" height="12" fill="#5a5f78"/>
<text x="73.7" y="7.8" font-size="5.5" fill="#b8bccc" font-family="Liberation Sans">400</text>
<rect x="89.4" y="8.5" width="1" height="3.5" fill="#5a5f78"/>
<rect x="106.6" y="0" width="1" height="12" fill="#5a5f78"/>
<text x="108.1" y="7.8" font-size="5.5" fill="#b8bccc" font-family="Liberation Sans">600</text>
<rect x="123.8" y="8.5" width="1" height="3.5" fill="#5a5f78"/>
<rect x="141.0" y="0" width="1" height="12" fill="#5a5f78"/>
<text x="142.5" y="7.8" font-size="5.5" fill="#b8bccc" font-family="Liberation Sans">800</text>
<rect x="158.2" y="8.5" width="1" height="3.5" fill="#5a5f78"/>
<rect x="175.4" y="0" width="1" height="12" fill="#5a5f78"/>
<text x="176.9" y="7.8" font-size="5.5" fill="#b8bccc" font-family="Liberation Sans">1000</text>
<rect x="192.7" y="8.5" width="1" height="3.5" fill="#5a5f78"/>
<rect x="209.9" y="0" width="1" height="12" fill="#5a5f78"/>
<text x="211.4" y="7.8" font-size="5.5" fill="#b8bccc" font-family="Liberation Sans">1200</text>
<rect x="227.1" y="8.5" width="1" height="3.5" fill="#5a5f78"/>
<rect x="244.3" y="0" width="1" height="12" fill="#5a5f78"/>
<text x="245.8" y="7.8" font-size="5.5" fill="#b8bccc" font-family="Liberation Sans">1400</text>
<rect x="261.5" y="8.5" width="1" height="3.5" fill="#5a5f78"/>
<rect x="278.7" y="0" width="1" height="12" fill="#5a5f78"/>
<text x="280.2" y="7.8" font-size="5.5" fill="#b8bccc" font-family="Liberation Sans">1600</text>
<rect x="296.0" y="8.5" width="1" height="3.5" fill="#5a5f78"/>
<rect x="313.2" y="0" width="1" height="12" fill="#5a5f78"/>
<text x="314.7" y="7.8" font-size="5.5" fill="#b8bccc" font-family="Liberation Sans">1800</text>
<rect x="330.4" y="8.5" width="1" height="3.5" fill="#5a5f78"/>
<rect x="15.5" y="0" width="1.2" height="12" fill="#3a94e8"/>
</svg>
<div class="a" style="left:528px;top:84px;width:348px;height:1.5px;background:#c8cce0"></div>

<!-- right view -->
<div class="a" style="left:541px;top:85.5px;width:335px;height:314.5px;background:#1f2838"></div>
<div class="t" style="left:547px;top:91.5px;font-size:7.6px;font-weight:bold;color:#e4e8f0">Active Camera</div>
<svg class="a" style="left:541px;top:85px" width="335" height="315">
<rect x="0" y="37.2" width="335" height="1.8" fill="#5654a0"/>
<rect x="0" y="41.8" width="335" height="1" fill="#4a4a3c"/>
<rect x="0" y="45.2" width="335" height="1" fill="#56543c"/>
<rect x="0" y="47" width="335" height="1.2" fill="#443a78"/>
<rect x="0" y="49.5" width="335" height="1" fill="#4a4040"/>
<rect x="0" y="57" width="335" height="1" fill="#40343a"/>
<rect x="0" y="255.5" width="335" height="4.5" fill="#23243a"/>
<rect x="0" y="259.5" width="335" height="1" fill="#2c2a40"/>
<rect x="0" y="263.8" width="335" height="1.2" fill="#3a3438"/>
<rect x="0" y="271" width="335" height="4" fill="#2a3040"/>
<rect x="0" y="276.6" width="335" height="1.6" fill="#5a4a3a"/>
<rect x="0" y="281.3" width="335" height="1" fill="#3a2a3a"/>
<rect x="0" y="286" width="335" height="2" fill="#5a50a8"/>
<rect x="0" y="290" width="335" height="1" fill="#3a3c50"/>
</svg>
<svg class="a" style="left:543px;top:154px" width="330" height="186" viewBox="0 0 330 186">
<defs>
<linearGradient id="sky" x1="0" y1="0" x2="0" y2="1"><stop offset="0" stop-color="#d8267e"/><stop offset="0.45" stop-color="#de3c72"/></linearGradient>
<linearGradient id="gnd" x1="0" y1="0" x2="0" y2="1"><stop offset="0" stop-color="#1c8c52"/><stop offset="1" stop-color="#157444"/></linearGradient>
<linearGradient id="coral" x1="0" y1="0" x2="1" y2="0"><stop offset="0.25" stop-color="#e26a48"/><stop offset="0.45" stop-color="#e04a66"/></linearGradient>
<linearGradient id="ylw" x1="0" y1="0" x2="1" y2="0"><stop offset="0.78" stop-color="#e2b81e"/><stop offset="0.98" stop-color="#e6882a"/></linearGradient>
</defs>
<rect width="330" height="186" fill="url(#sky)"/>
<path d="M0 37 C5 38 10 40 15 42 L0 50 Z" fill="#e2702c"/>
<!-- orange big -->
<path d="M140 62 C160 50 190 36 205 26 C212 22 222 18 232 17.3 C242 18 248 24 254 30 C260 38 266 44 278 48 C292 51 305 52 314 56 C322 60 326 64 330 69 L330 92 L140 92 Z" fill="#e6882a"/>
<!-- coral/pink under yellow -->
<path d="M0 52 C15 48 30 46 45 45.6 C55 46 60 49 66 50 C72 49 80 46 90 45 C100 45 108 48 115 52 C122 57 128 61 132 62 C150 60 170 56 190 52 L206 47 C198 55 193 62 190 80 L190 95 L0 95 Z" fill="url(#coral)"/>
<!-- yellow band -->
<path d="M0 46 C10 45 22 40 30 36 C38 31 45 27 55 26 C62 26 66 27 70 32 C72 36 73 39 75 41.5 C80 40 86 38.5 92 38.5 C100 38.5 106 41 112 43 C118 44 122 42 128 40.5 C136 38 145 34 155 29 C165 25 178 23.5 190 23.5 C198 24 204 25 208 29 C212 34 212 42 206 47 C200 50 196 51 190 52 C175 55 160 58 145 60 C138 61 134 62 132 62 C126 60 118 54 110 49 C104 46 98 45 90 45 C82 45.5 74 47.5 66 50 C58 49.5 52 46 45 45.6 C32 45.5 15 48 0 52 Z" fill="url(#ylw)"/>
<!-- salmon hill -->
<path d="M190 80 C195 70 200 63 208 57 C214 52 218 51 223 51 C232 52 240 56 245 62 C248 66 251 72 256 82 Z" fill="#e46a52"/>
<!-- pink hill right -->
<path d="M262 92 C270 88 280 84 292 80 C302 77 310 76.5 318 77 C322 77.5 324 78 326 79 L326 92 Z" fill="#de4678"/>
<path d="M320 92 C322 86 326 80 330 76 L330 92 Z" fill="#e8902a"/>
<path d="M320 61 L330 58 L330 67 Z" fill="#8a20b0"/>
<!-- purple left -->
<path d="M0 71 C8 72 18 76 30 79 L60 100 L60 112 L0 112 Z" fill="#7618e0"/>
<!-- dark purple big mountain -->
<path d="M28 79 L40 76 L66 60 L80 51 L100 58 L116 64 L132 70 L135 69 L150 78 L165 80 L185 68.6 L200 75 L238 86 L252 94 L252 110 L30 110 Z" fill="#4c14b0"/>
<path d="M150 78 L165 80 L185 68.6 L200 75 L238 86 L252 94 L150 94 Z" fill="#6c10e0"/>
<path d="M80 51 L66 60 L40 76 L50 76 L62 70 L70 64 L76 58 Z" fill="#b4a0ee"/>
<path d="M135 69 L145 73 L140 75 L133 71 Z" fill="#b4a0ee"/>
<path d="M170 77 L185 68.6 L190 71 L182 72 L176 78 Z" fill="#b4a0ee"/>
<path d="M0 90 L28 107 L30 112 L0 112 Z" fill="#4a14a8"/>
<!-- teal bushes -->
<path d="M8 96 C12 92 16 90 20 89.5 C26 88 30 87 35 87 C40 86 44 86 47 85.5 C52 84 55 83.7 58 83 C62 81 66 81 70 80.5 C76 80 80 82 85 83 C90 82 95 82 100 82.5 C106 83 110 84 115 86 C120 87 126 88 132 89 L150 94 L150 106 L28 106 Z" fill="#176a6a"/>
<path d="M28 103.5 L140 103.5 L140 109.5 L28 109.5 Z" fill="#2c8a78"/>
<!-- saturn -->
<ellipse cx="115" cy="72" rx="19" ry="4" fill="#30c4c4" transform="rotate(-20 115 72)"/><ellipse cx="115" cy="72" rx="14" ry="2" fill="#1a9aa0" transform="rotate(-20 115 72)"/><path d="M108 70 A7.5 7.5 0 0 1 123 67 Z" fill="#58dcdc"/><circle cx="104" cy="77" r="1.2" fill="#1a5a80"/>
<!-- castle -->
<rect x="127" y="96" width="20" height="20" fill="#9a1eb8"/>
<rect x="127" y="99" width="20" height="1.2" fill="#b848c8"/>
<rect x="127" y="104" width="20" height="1.2" fill="#b848c8"/>
<rect x="127" y="109" width="20" height="1.2" fill="#b848c8"/>
<rect x="143" y="91" width="48" height="28" fill="#9018b0"/>
<rect x="149" y="90" width="40" height="4.5" fill="#e0602c"/>
<rect x="143" y="99" width="48" height="1.5" fill="#b848c8"/>
<rect x="143" y="104" width="48" height="1.5" fill="#b848c8"/>
<rect x="143" y="109" width="48" height="1.5" fill="#b848c8"/>
<rect x="143" y="114" width="48" height="1.5" fill="#c85a70"/>
<rect x="157" y="82" width="10" height="34" fill="#a830c8"/>
<circle cx="162" cy="81.5" r="5" fill="#e8782c"/>
<rect x="191" y="80" width="9" height="30" fill="#a028c0"/>
<circle cx="195.5" cy="80" r="4.8" fill="#e8782c"/>
<rect x="198" y="92" width="8" height="16" fill="#9a20b8"/>
<!-- green ground -->
<path d="M0 109.5 L127 109.5 L127 119 L175 120 L200 107 L225 93 L330 92 L330 186 L0 186 Z" fill="url(#gnd)"/>
<!-- light green hill -->
<path d="M120 114 C135 111 150 111 160 114 C168 117 172 120 176 125 L120 125 Z" fill="#22905a"/>
<!-- dark green big hill -->
<path d="M160 124 C175 120 188 114 200 108 C212 100 220 95 232 93 L330 92 L330 186 L150 186 L150 130 Z" fill="#197042"/>
<path d="M0 132 C40 130 90 128 150 130 L170 186 L0 186 Z" fill="#167a46" opacity="0.6"/>
<!-- teal valley -->
<path d="M254 92 C262 95 270 100 276 106 C282 110 287 112 292 112 C300 112 308 108 314 104 C320 99 325 95 330 92 Z" fill="#3a9a80"/>
<!-- tree -->
<circle cx="246.3" cy="70.3" r="8.7" fill="#44a04e"/>
<circle cx="238" cy="80" r="4" fill="#1c7a44"/>
<circle cx="253" cy="79" r="3" fill="#1c7a44"/>
<rect x="244.5" y="78" width="3" height="13" fill="#903048"/>
<circle cx="249" cy="86" r="2.2" fill="#f0d040"/>
<circle cx="245" cy="91" r="2" fill="#40b0e0"/>
<ellipse cx="236" cy="90" rx="3" ry="1.8" fill="#f0d0d0"/>
<!-- people -->
<circle cx="69" cy="112" r="3" fill="#e88040"/><path d="M66 115 L72 115 L73 125 L65 125 Z" fill="#ecf0f8"/><ellipse cx="69" cy="126" rx="7" ry="2.5" fill="#6a48b8"/>
<circle cx="92" cy="110" r="3.2" fill="#2a1e30"/><path d="M87 114 L97 114 L98 124 L86 124 Z" fill="#e84030"/><circle cx="92" cy="120" r="3" fill="#f0a020"/><ellipse cx="92" cy="126" rx="8" ry="2.6" fill="#5a3ab0"/>
<circle cx="125" cy="113" r="3" fill="#e88040"/><path d="M120 117 L130 117 L131 127 L119 127 Z" fill="#b040c8"/><ellipse cx="113" cy="127" rx="7" ry="2.5" fill="#6a48b8"/><path d="M108 127 L113 120 L116 127 Z" fill="#5a3a90"/>
<!-- pink flower top-left -->
<circle cx="6" cy="124.5" r="4.5" fill="#d044b0"/>
<path d="M0 130 L5 132 L3 145 L0 145 Z" fill="#3a2a90"/>
<!-- dark leaves -->
<path d="M14 186 C12 170 14 150 24 132 C30 150 32 170 28 186 Z" fill="#0f6040"/>
<path d="M48 186 C46 168 50 150 58 136 C64 152 64 170 60 186 Z" fill="#115e42"/>
<path d="M25 140 C35 132 50 130 62 135 C55 140 42 142 25 140 Z" fill="#137048"/>
<path d="M115 125 C122 140 126 160 122 186 L114 186 C116 165 116 145 115 125 Z" fill="#135848"/>
<path d="M142 125 C152 130 160 140 160 150 C152 145 146 138 142 125 Z" fill="#1a5a50"/>
<!-- bright green leaves -->
<path d="M22 142 C36 142 50 148 58 158 C64 166 66 176 66 186 L60 186 C59 176 56 166 50 160 C42 152 32 147 22 142 Z" fill="#56c82a"/>
<path d="M70 121 C80 126 90 136 95 150 C99 162 99 176 96 186 L88 186 C90 176 89 164 86 154 C82 142 76 132 70 121 Z" fill="#62d030"/><path d="M70 121 C74 132 80 142 90 150 C86 138 80 128 70 121 Z" fill="#4ab828"/>
<path d="M60 143 C74 146 86 152 94 162 C98 170 100 178 100 186 L95 186 C94 178 92 170 88 165 C80 156 70 150 60 143 Z" fill="#50c828"/>
<path d="M130 135 C133 145 133 155 128 165 C125 155 126 145 130 135 Z" fill="#60c828"/>
<path d="M134 128 C140 135 142 145 138 155 C134 148 132 138 134 128 Z" fill="#58c02a"/>
<!-- ferns -->
<path d="M36 160 L46 186 M40 165 L34 168 M42 170 L36 174 M44 176 L38 180 M41 165 L48 162 M43 171 L50 168" stroke="#4ab040" stroke-width="2" fill="none"/>
<!-- red/pink flowers -->
<path d="M28 150 C32 144 38 142 44 143 C40 148 36 152 30 154 Z" fill="#e02872"/>
<path d="M38 140 L46 140 L42 146 Z" fill="#e02872"/>
<circle cx="42" cy="153" r="2.5" fill="#f07030"/>
<path d="M56 168 C60 158 68 154 80 154 C78 162 72 168 62 174 Z" fill="#d82880"/><path d="M60 160 C66 152 72 150 76 150 C72 156 68 160 62 164 Z" fill="#e03080"/><path d="M50 176 C56 168 62 166 70 166 C66 172 60 176 52 178 Z" fill="#c82880"/>
<path d="M66 176 C68 168 72 162 78 160 C78 168 74 174 68 178 Z" fill="#e83070"/>
<path d="M76 168 L84 164 L80 176 Z" fill="#f07030"/>
<path d="M72 176 L80 178 L76 184 Z" fill="#f07030"/>
<circle cx="64" cy="170" r="3" fill="#e03880"/>
<!-- cyan leaves left -->
<ellipse cx="4" cy="154.5" rx="4.5" ry="6" fill="#38d8e8"/>
<ellipse cx="4" cy="164" rx="4.5" ry="4" fill="#30c8d8"/>
<circle cx="20" cy="164.5" r="4.5" fill="#20a088"/>
<ellipse cx="5" cy="184" rx="5" ry="3" fill="#40e0f0"/>
<ellipse cx="22" cy="184" rx="5" ry="3" fill="#40d8e8"/>
<path d="M10 186 L14 160" stroke="#1a5a88" stroke-width="1.2"/>
<!-- branch with cyan leaves -->
<path d="M105 186 C104 172 102 160 100 148 M102 165 L110 158 M103 175 L112 170" stroke="#8a3a50" stroke-width="1" fill="none"/>
<g fill="#40d0e0"><ellipse cx="98" cy="148" rx="2" ry="3"/><ellipse cx="108" cy="150" rx="2" ry="3"/><ellipse cx="111" cy="158" rx="2" ry="3"/><ellipse cx="108" cy="168" rx="2" ry="3"/><ellipse cx="115" cy="170" rx="2" ry="3"/><ellipse cx="108" cy="178" rx="2" ry="3"/><ellipse cx="112" cy="183" rx="2" ry="2.5"/><ellipse cx="96" cy="160" rx="2" ry="3"/></g>
<circle cx="128" cy="168" r="4.5" fill="#38d0e0"/>
<circle cx="126" cy="180" r="3.5" fill="#30b8d0"/>
<circle cx="143" cy="178" r="4" fill="#20a088"/>
<!-- flowers middle -->
<g fill="#a8d0f0"><circle cx="147" cy="152.5" r="1.8"/><circle cx="150.5" cy="155" r="1.8"/><circle cx="149.5" cy="159" r="1.8"/><circle cx="145" cy="159" r="1.8"/><circle cx="143.5" cy="155" r="1.8"/></g><circle cx="147" cy="156" r="1.3" fill="#e060a0"/>
<path d="M160 150 L164 154 L168 148 L170 155 L165 160 L160 157 Z" fill="#f06040"/>
<g fill="#30b4c8"><circle cx="168" cy="170" r="4.5"/><circle cx="174" cy="174" r="4.5"/><circle cx="173" cy="181" r="4.5"/><circle cx="166" cy="184" r="4.5"/><circle cx="161" cy="178" r="4.5"/><circle cx="162" cy="172" r="4"/></g><circle cx="168" cy="177.8" r="2" fill="#d0f4f0"/>
<g fill="#a8d0f0"><circle cx="205" cy="154.5" r="1.8"/><circle cx="208.5" cy="157" r="1.8"/><circle cx="207.5" cy="161" r="1.8"/><circle cx="203" cy="161" r="1.8"/><circle cx="201.5" cy="157" r="1.8"/></g><circle cx="205" cy="158" r="1.3" fill="#e060a0"/>
<path d="M190 186 C195 178 200 172 210 166" stroke="#8a3a50" stroke-width="1" fill="none"/>
<g fill="#40d0e0"><ellipse cx="213" cy="166" rx="2.5" ry="2"/><ellipse cx="215" cy="172" rx="2.5" ry="2"/><ellipse cx="200" cy="172" rx="2" ry="2.5"/><ellipse cx="190" cy="178" rx="2" ry="2.5"/><ellipse cx="210" cy="183" rx="2.5" ry="2"/><ellipse cx="184" cy="168" rx="2" ry="2.5"/></g>
<!-- pink stalk -->
<path d="M237 126 C237 123 244 123 244 126 L242 148 L239 148 Z" fill="#d82a70"/>
<!-- white grass -->
<path d="M232 186 C234 172 236 160 235 145 C238 158 238 172 236 186 Z" fill="#c8f0dc"/>
<path d="M222 176 C228 178 232 182 234 186 L230 186 C228 182 225 179 222 176 Z" fill="#c8f0dc"/>
<path d="M256 186 L257 160 L259 160 L259 186 Z" fill="#b8e8d0"/>
<path d="M240 160 C245 170 248 178 248 186 L245 186 C245 178 242 170 240 160 Z" fill="#1a9080"/>
<path d="M267.5 186 L267.5 142 L269 142 L269 186 Z" fill="#c8f0dc"/>
<g fill="#c8f0dc"><ellipse cx="271" cy="150" rx="2" ry="1"/><ellipse cx="266" cy="158" rx="2" ry="1"/><ellipse cx="271" cy="166" rx="2" ry="1"/><ellipse cx="266" cy="174" rx="2" ry="1"/><ellipse cx="271" cy="180" rx="2" ry="1"/></g>
<!-- cyan flower right -->
<g fill="#28a8c0"><circle cx="300" cy="158" r="4.5"/><circle cx="306" cy="162" r="4.5"/><circle cx="305" cy="169" r="4.5"/><circle cx="298" cy="171" r="4.5"/><circle cx="293" cy="165" r="4.5"/></g><circle cx="299.8" cy="164.5" r="1.6" fill="#d0f4f0"/>
<path d="M284 172 C288 176 290 180 292 186 L286 186 C286 180 285 176 284 172 Z" fill="#1a5860"/>
</svg>

<!-- right side -->
<div class="a" style="left:877px;top:35px;width:3px;height:365px;background:#181c2a"></div>
<div class="a" style="left:880px;top:33px;width:20px;height:367px;background:#242a3a"></div>
</div></body></html>
